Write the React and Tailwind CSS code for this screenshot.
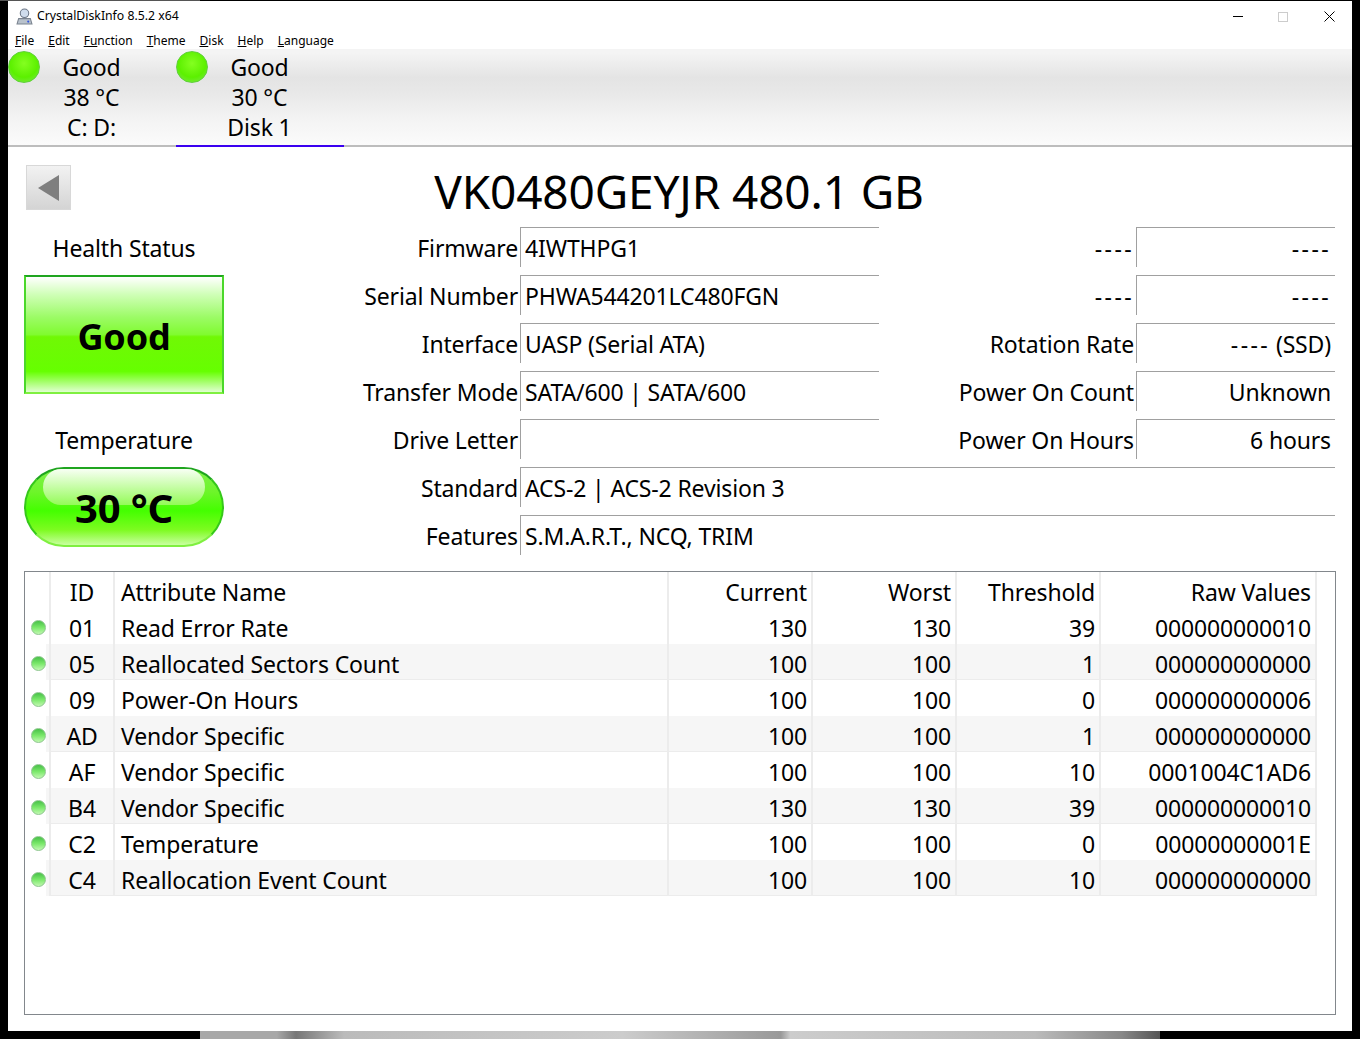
import React from 'react';

const Dash = () => <span className="tracking-[2.4px]">----</span>;

const leftRows = [
  ['Firmware', '4IWTHPG1', <Dash />, <Dash />],
  ['Serial Number', 'PHWA544201LC480FGN', <Dash />, <Dash />],
  ['Interface', 'UASP (Serial ATA)', 'Rotation Rate', <><Dash /> (SSD)</>],
  ['Transfer Mode', 'SATA/600 | SATA/600', 'Power On Count', 'Unknown'],
  ['Drive Letter', '', 'Power On Hours', '6 hours'],
];

const attrs = [
  ['01', 'Read Error Rate', '130', '130', '39', '000000000010'],
  ['05', 'Reallocated Sectors Count', '100', '100', '1', '000000000000'],
  ['09', 'Power-On Hours', '100', '100', '0', '000000000006'],
  ['AD', 'Vendor Specific', '100', '100', '1', '000000000000'],
  ['AF', 'Vendor Specific', '100', '100', '10', '0001004C1AD6'],
  ['B4', 'Vendor Specific', '130', '130', '39', '000000000010'],
  ['C2', 'Temperature', '100', '100', '0', '00000000001E'],
  ['C4', 'Reallocation Event Count', '100', '100', '10', '000000000000'],
];

const Menu = ({ k, rest }) => (
  <span><span className="underline">{k}</span>{rest}</span>
);

const BigLed = () => (
  <div className="w-[32px] h-[32px] rounded-full border border-[#5fd03a] bg-[radial-gradient(circle_at_50%_38%,#84ff20_0%,#5cf000_58%,#70ea30_82%,#c0f8a8_100%)]" />
);

const SmallLed = () => (
  <div className="w-[15px] h-[15px] rounded-full border border-[#8cc68c] bg-[linear-gradient(#48c048,#7ae86a_50%,#c0f8b0)]" />
);

const DiskTab = ({ temp, name, active }) => (
  <div className={`flex w-[168px] h-[98px] ${active ? 'border-b-2 border-[#3a00f0]' : ''}`}>
    <div className="pt-[2px] w-[32px] shrink-0"><BigLed /></div>
    <div className="w-[103px] pt-[3px] flex flex-col items-center text-[23px] leading-[30px] text-black">
      <div>Good</div>
      <div>{temp}</div>
      <div>{name}</div>
    </div>
  </div>
);

const Box = ({ children, right, className }) => (
  <div className={`h-[40px] border-t border-l border-[#a0a0a0] text-[23px] leading-[40px] whitespace-nowrap ${right ? 'text-right pr-[4px]' : 'pl-[4px]'} ${className}`}>
    {children}
  </div>
);

const Label = ({ children, className }) => (
  <div className={`h-[40px] text-right text-[23px] leading-[42px] whitespace-nowrap ${className}`}>{children}</div>
);

const gridCols = 'grid grid-cols-[26px_64px_554px_144px_144px_144px_216px]';

const Row = ({ cells, led, shaded }) => (
  <div className={`${gridCols} h-[36px] text-[23px] leading-[40px] w-[1292px]`}>
    <div className={`h-[36px] pt-[12px] pl-[6px] border-r-2 border-[#ececec] ${shaded ? 'bg-[linear-gradient(90deg,transparent_21px,#f6f6f6_21px)]' : ''}`}>
      {led && <SmallLed />}
    </div>
    {cells.map((c, i) => (
      <div
        key={i}
        className={`h-[36px] border-r-2 border-[#ececec] whitespace-nowrap ${i === 0 ? 'text-center' : i === 1 ? 'pl-[6px]' : 'text-right pr-[4px]'} ${shaded ? 'bg-[#f6f6f6] border-b border-b-[#ececec]' : ''}`}
      >
        {c}
      </div>
    ))}
  </div>
);

const App = () => {
  return (
    <div className="w-[1360px] h-[1039px] bg-black flex flex-col overflow-hidden font-['Noto_Sans','Open_Sans',sans-serif] tracking-[-0.15px] text-black">
      <div className="h-px w-[200px] shrink-0 bg-[#555]" />
      <div className="mx-2 h-[1030px] shrink-0 bg-white flex flex-col">
        {/* title bar */}
        <div className="h-[31px] shrink-0 flex items-center pl-[8px] text-[12.25px] tracking-normal">
          <svg viewBox="0 0 16 16" className="w-[17px] h-[17px] mr-[4px]">
            <circle cx="8" cy="5" r="4" fill="#cfdcec" stroke="#6b7686" />
            <path d="M1 15 L2.5 10 H13.5 L15 15 Z" fill="#b9c2cc" stroke="#7b8490" />
            <circle cx="11.5" cy="12.8" r="1" fill="#3355dd" />
          </svg>
          <span>CrystalDiskInfo 8.5.2 x64</span>
          <div className="ml-auto flex items-center">
            <div className="w-[10px] h-px bg-black mr-[35px]" />
            <div className="w-[10px] h-[10px] border border-[#ccc] mr-[36px]" />
            <svg viewBox="0 0 11 11" className="w-[11px] h-[11px] mr-[17px]">
              <path d="M0.5 0.5 L10.5 10.5 M10.5 0.5 L0.5 10.5" stroke="#000" strokeWidth="1" />
            </svg>
          </div>
        </div>
        {/* menu */}
        <div className="h-[17px] shrink-0 flex pl-[7px] gap-[14px] text-[12px] leading-[17px] tracking-normal">
          <Menu k="F" rest="ile" />
          <Menu k="E" rest="dit" />
          <Menu k="Fu" rest="nction" />
          <Menu k="T" rest="heme" />
          <Menu k="D" rest="isk" />
          <Menu k="H" rest="elp" />
          <Menu k="L" rest="anguage" />
        </div>
        {/* disk tabs */}
        <div className="h-[98px] shrink-0 flex border-b-2 border-[#bdbdbd] bg-[linear-gradient(#f4f4f4_0%,#f4f4f4_4%,#e4e4e4_30%,#e8e8e8_45%,#f4f4f4_75%,#fbfbfb_100%)]">
          <DiskTab temp="38 °C" name="C: D:" />
          <DiskTab temp="30 °C" name="Disk 1" active />
        </div>
        {/* model title */}
        <div className="h-[80px] shrink-0 flex relative">
          <div className="ml-[18px] mt-[18px] w-[45px] h-[45px] border border-[#d8d8d8] bg-[linear-gradient(#f2f2f2,#d4d4d4)] flex items-center justify-center">
            <svg viewBox="0 0 22 26" className="w-[22px] h-[26px]">
              <path d="M0 13 L21 0 V26 Z" fill="#7f7f7f" />
            </svg>
          </div>
          <div className="absolute left-0 right-0 top-[13px] text-center text-[46px] leading-[62px] -translate-x-px">
            VK0480GEYJR 480.1 GB
          </div>
        </div>
        {/* info block */}
        <div className="h-[344px] shrink-0 flex">
          <div className="w-[232px] shrink-0 pl-[16px] flex flex-col">
            <div className="w-[200px] h-[48px] text-center text-[23px] leading-[42px]">Health Status</div>
            <div className="w-[200px] h-[119px] pt-[5px] border-2 border-t-[#1fa51f] border-x-[#4bd82a] border-b-[#7ff040] bg-[linear-gradient(#ffffff_0%,#d0ffb8_15%,#9cfb66_35%,#80fb30_50%,#70f805_52%,#66ff00_82%,#e0ffd0_100%)] flex items-center justify-center text-[36px] font-bold leading-none">
              Good
            </div>
            <div className="w-[200px] h-[73px] pt-[22px] text-center text-[23px] leading-[48px]">Temperature</div>
            <div className="w-[200px] h-[80px] pt-[2px] rounded-[40px] border-2 border-t-[#1fa51f] border-x-[#35c81a] border-b-[#7ff040] bg-[linear-gradient(#7ff04a_0%,#6ef52a_30%,#44ff00_55%,#7dfb20_80%,#c9ffa0_100%)] relative flex items-center justify-center text-[40px] font-bold leading-none">
              <div className="absolute left-[17px] right-[17px] top-0 h-[36px] rounded-[24px] bg-[linear-gradient(#f8fff4,#94fb58)]" />
              <span className="relative">30 °C</span>
            </div>
          </div>
          <div className="flex-1 flex flex-col">
            <div className="flex flex-col gap-[8px]">
              {leftRows.map(([l, v, rl, rv]) => (
                <div key={l} className="flex">
                  <Label className="w-[278px]">{l}</Label>
                  <Box className="ml-[2px] w-[359px]">{v}</Box>
                  <Label className="w-[255px]">{rl}</Label>
                  <Box right className="ml-[2px] w-[199px]">{rv}</Box>
                </div>
              ))}
              <div className="flex">
                <Label className="w-[278px]">Standard</Label>
                <Box className="ml-[2px] w-[815px]">ACS-2 | ACS-2 Revision 3</Box>
              </div>
              <div className="flex">
                <Label className="w-[278px]">Features</Label>
                <Box className="ml-[2px] w-[815px]">S.M.A.R.T., NCQ, TRIM</Box>
              </div>
            </div>
          </div>
        </div>
        {/* smart table */}
        <div className="ml-[16px] w-[1312px] h-[444px] border border-[#82878c]">
          <Row cells={['ID', 'Attribute Name', 'Current', 'Worst', 'Threshold', 'Raw Values']} />
          {attrs.map((a, i) => (
            <Row key={i} cells={a} led shaded={i % 2 === 1} />
          ))}
        </div>
      </div>
      <div className="h-[8px] shrink-0 ml-[200px] w-[960px] bg-[linear-gradient(90deg,#a8a8a8_0%,#a8a8a8_8%,#777_10%,#bbb_15%,#ccc_44%,#999_60.5%,#ccc_61.5%,#bbb_87%,#888_96%,#555_100%)]" />
    </div>
  );
};

export default App;
